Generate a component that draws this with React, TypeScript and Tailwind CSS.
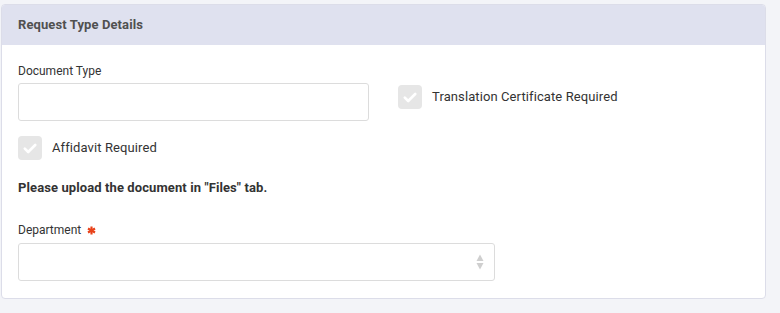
import React from "react";

function Check({ className = "" }: { className?: string }) {
  return (
    <div className={`flex h-[24px] w-[24px] items-center justify-center rounded-[4px] bg-[#e6e6e6] ${className}`}>
      <svg width="14" height="11" viewBox="0 0 14 11" fill="none">
        <path d="M1.8 5.6 L5.2 9 L12.2 2" stroke="#ffffff" strokeWidth="2.6" strokeLinecap="round" strokeLinejoin="round" />
      </svg>
    </div>
  );
}

export default function App() {
  return (
    <div className="h-[313px] w-[780px] bg-[#f3f4f8] pl-[1px] pt-[4px]" style={{ fontFamily: "Roboto, 'Liberation Sans', sans-serif" }}>
      <div className="h-[295px] w-[765px] overflow-hidden rounded-[4px] border border-[#dcdde9] bg-white">
        <div className="flex h-[40px] items-center bg-[#dfe1ef] pl-[16px] text-[13px] font-bold tracking-[0.1px] text-[#505050]">
          Request Type Details
        </div>
        <div className="pl-[16px] pt-[18px] text-[13px] tracking-[0.1px] text-[#333333]">
          <div className="flex">
            <div className="w-[351px]">
              <div className="h-[16px] text-[12px] leading-[16px] tracking-normal">Document Type</div>
              <div className="mt-[4px] h-[38px] rounded-[3px] border border-[#dcdcdc] bg-white" />
            </div>
            <div className="ml-[29px] mt-[22px] flex h-[24px] items-center">
              <Check />
              <span className="ml-[10px]">Translation Certificate Required</span>
            </div>
          </div>
          <div className="mt-[15px] flex h-[24px] items-center">
            <Check />
            <span className="ml-[10px]">Affidavit Required</span>
          </div>
          <div className="mt-[20px] h-[16px] font-bold leading-[16px] text-[#333333]">
            Please upload the document in "Files" tab.
          </div>
          <div className="mt-[26px] flex h-[16px] items-center text-[12px] leading-[16px] tracking-normal">
            <span>Department</span>
            <svg className="ml-[6px]" width="9" height="9" viewBox="0 0 10 10">
              <g stroke="#e8421a" strokeWidth="2.4" strokeLinecap="butt">
                <line x1="5" y1="0.5" x2="5" y2="9.5" />
                <line x1="1.1" y1="2.75" x2="8.9" y2="7.25" />
                <line x1="1.1" y1="7.25" x2="8.9" y2="2.75" />
              </g>
            </svg>
          </div>
          <div className="mt-[5px] flex h-[38px] w-[477px] items-center justify-end rounded-[3px] border border-[#dcdcdc] bg-white pr-[10px]">
            <svg width="8" height="16" viewBox="0 0 8 16">
              <path d="M4 0.5 L7.5 7 L0.5 7 Z" fill="#cfcfcf" />
              <path d="M4 15.5 L7.5 9 L0.5 9 Z" fill="#cfcfcf" />
            </svg>
          </div>
        </div>
      </div>
    </div>
  );
}
